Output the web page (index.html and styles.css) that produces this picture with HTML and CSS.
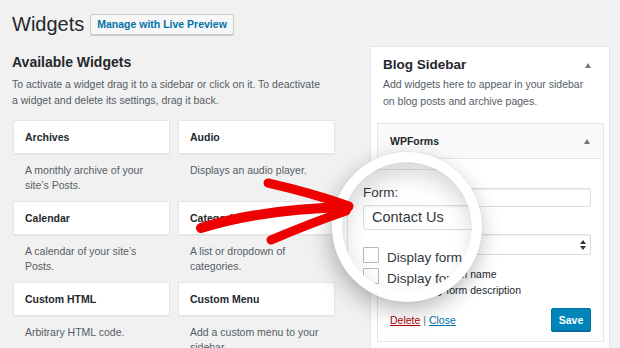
FILE: index.html
```html
<!DOCTYPE html>
<html lang="en">
<head>
  <meta charset="UTF-8">
  <title>Widgets</title>
  <link rel="stylesheet" href="styles.css">
</head>
<body>
  <div class="wrap">
    <header class="page-head">
      <h1>Widgets</h1>
      <a class="btn-preview" href="#">Manage with Live Preview</a>
    </header>

    <div class="columns">
      <section class="available">
        <h2>Available Widgets</h2>
        <p class="intro">To activate a widget drag it to a sidebar or click on it. To deactivate a widget and delete its settings, drag it back.</p>
        <div class="widget-grid">
          <div class="widget">
            <div class="widget-title">Archives</div>
            <p class="widget-desc">A monthly archive of your site&rsquo;s Posts.</p>
          </div>
          <div class="widget">
            <div class="widget-title">Audio</div>
            <p class="widget-desc">Displays an audio player.</p>
          </div>
          <div class="widget">
            <div class="widget-title">Calendar</div>
            <p class="widget-desc">A calendar of your site&rsquo;s Posts.</p>
          </div>
          <div class="widget">
            <div class="widget-title">Categories</div>
            <p class="widget-desc">A list or dropdown of categories.</p>
          </div>
          <div class="widget">
            <div class="widget-title">Custom HTML</div>
            <p class="widget-desc">Arbitrary HTML code.</p>
          </div>
          <div class="widget">
            <div class="widget-title">Custom Menu</div>
            <p class="widget-desc">Add a custom menu to your sidebar.</p>
          </div>
        </div>
      </section>

      <section class="sidebar-panel">
        <div class="panel-head">
          <h2>Blog Sidebar</h2>
          <span class="toggle"></span>
        </div>
        <p class="panel-desc">Add widgets here to appear in your sidebar on blog posts and archive pages.</p>

        <div class="wpforms">
          <div class="wpforms-head">
            <span>WPForms</span>
            <span class="toggle"></span>
          </div>
          <div class="wpforms-body">
            <label class="field-label">Title:</label>
            <div class="text-input"></div>
            <label class="field-label">Form:</label>
            <div class="select-input">
              <svg width="6" height="10" viewBox="0 0 6 10"><path d="M3 0L6 4H0Z M3 10L0 6H6Z" fill="#32373c"/></svg>
            </div>
            <label class="check"><span class="box"></span>Display form name</label>
            <label class="check"><span class="box"></span>Display form description</label>
            <div class="actions">
              <span><a class="link-delete" href="#">Delete</a> | <a class="link-close" href="#">Close</a></span>
              <button class="btn-save">Save</button>
            </div>
          </div>
        </div>
      </section>
    </div>
  </div>

  <!-- magnifier over the widget form -->
  <div class="lens">
    <div class="lens-inner">
      <div class="lens-form">
        <div class="lens-label">Form:</div>
        <div class="lens-input">Contact Us</div>
        <div class="lens-check"><span class="lens-box"></span>Display form</div>
        <div class="lens-check"><span class="lens-box"></span>Display form name</div>
      </div>
    </div>
  </div>

  <svg class="arrow" width="620" height="348" viewBox="0 0 620 348">
    <g fill="none" stroke="#ee0000" stroke-linecap="round">
      <path d="M201 228 Q262 209 348 207" stroke-width="10"/>
      <path d="M268 183 Q312 193 349 206" stroke-width="9"/>
      <path d="M271 240 Q311 223 346 211" stroke-width="9"/>
    </g>
  </svg>
</body>
</html>
```

FILE: styles.css
```css
:root {
  --bg: #f1f1f1;
  --border: #e5e5e5;
  --text: #23282d;
  --muted: #555d66;
  --blue: #0073aa;
}

body {
  margin: 0;
  height: 348px;
  overflow: hidden;
  position: relative;
  background: var(--bg);
  font-family: "Liberation Sans", Arial, sans-serif;
  color: var(--text);
}

.wrap {
  padding-left: 12px;
}

/* header */
.page-head {
  display: flex;
  align-items: center;
  gap: 6px;
  padding-top: 12px;
  height: 24px;
}

.page-head h1 {
  margin: 0;
  font-size: 20px;
  line-height: 24px;
  font-weight: 400;
  color: var(--text);
}

.btn-preview {
  display: block;
  height: 21px;
  box-sizing: border-box;
  padding: 0 6px;
  line-height: 19px;
  font-size: 10.5px;
  font-weight: 700;
  color: var(--blue);
  text-decoration: none;
  background: #f7f7f7;
  border: 1px solid #cccccc;
  border-radius: 2px;
  box-shadow: 0 1px 0 #cccccc;
}

.columns {
  display: flex;
  margin-top: 10px;
}

/* left column */
.available {
  width: 323px;
}

.available h2 {
  margin: 8px 0 0;
  font-size: 14px;
  line-height: 17px;
  font-weight: 700;
}

.intro {
  margin: 5px 0 12px;
  max-width: 314px;
  font-size: 10.5px;
  line-height: 16px;
  color: var(--muted);
}

.widget-grid {
  display: grid;
  grid-template-columns: 157px 157px;
  column-gap: 8px;
  margin-left: 1px;
}

.widget-title {
  height: 34px;
  box-sizing: border-box;
  padding: 0 11px;
  line-height: 32px;
  font-size: 10.5px;
  font-weight: 700;
  background: #fff;
  border: 1px solid var(--border);
  box-shadow: 0 1px 1px rgba(0, 0, 0, 0.04);
}

.widget-desc {
  margin: 0;
  height: 47px;
  box-sizing: border-box;
  padding: 9px 12px 0;
  font-size: 10.5px;
  line-height: 15px;
  color: var(--muted);
}

/* sidebar panel */
.sidebar-panel {
  margin-left: 35px;
  width: 240px;
  height: 320px;
  box-sizing: border-box;
  padding: 10px 6px 0;
  background: #fff;
  border: 1px solid var(--border);
  box-shadow: 0 1px 1px rgba(0, 0, 0, 0.04);
}

.panel-head {
  display: flex;
  justify-content: space-between;
  align-items: center;
  padding: 0 12px 0 6px;
}

.panel-head h2 {
  margin: 0;
  font-size: 13.5px;
  line-height: 16px;
  font-weight: 700;
}

.toggle {
  width: 0;
  height: 0;
  border-left: 3.5px solid transparent;
  border-right: 3.5px solid transparent;
  border-bottom: 5px solid #72777c;
}

.panel-desc {
  margin: 3px 0 13px;
  padding: 0 6px;
  max-width: 208px;
  font-size: 10.5px;
  line-height: 17px;
  color: var(--muted);
}

.wpforms {
  width: 225px;
  border: 1px solid var(--border);
}

.wpforms-head {
  display: flex;
  justify-content: space-between;
  align-items: center;
  height: 34px;
  padding: 0 13px 0 12px;
  font-size: 10.5px;
  font-weight: 700;
  background: #fafafa;
  border-bottom: 1px solid var(--border);
}

.wpforms-body {
  padding: 0 12px 10px;
  font-size: 10.5px;
  color: var(--text);
}

.field-label {
  display: block;
  margin-top: 12px;
  line-height: 15px;
}

.text-input,
.select-input {
  margin-top: 2px;
  height: 19px;
  box-sizing: border-box;
  border: 1px solid #dddddd;
  border-radius: 2px;
  box-shadow: inset 0 1px 2px rgba(0, 0, 0, 0.07);
}

.select-input {
  height: 21px;
  margin-top: 0;
  display: flex;
  justify-content: flex-end;
  align-items: center;
  padding-right: 4px;
  margin-bottom: 11px;
}

.check {
  display: flex;
  align-items: center;
  line-height: 16px;
}

.check .box {
  width: 12px;
  height: 12px;
  box-sizing: border-box;
  margin-right: 7px;
  border: 1px solid #b4b9be;
  background: #fff;
}

.actions {
  display: flex;
  justify-content: space-between;
  align-items: center;
  margin-top: 10px;
  color: #72777c;
}

.link-delete {
  color: #a00;
}

.link-close {
  color: var(--blue);
}

.btn-save {
  width: 40px;
  height: 23px;
  padding: 0;
  font-family: inherit;
  font-size: 10.5px;
  font-weight: 700;
  color: #fff;
  background: #0085ba;
  border: 1px solid #0073aa;
  border-radius: 2px;
  box-shadow: 0 1px 0 #006799;
}

/* magnifier */
.lens {
  position: absolute;
  left: 332px;
  top: 152px;
  width: 150px;
  height: 150px;
  box-sizing: border-box;
  padding: 10px;
  border-radius: 50%;
  background: #fff;
  box-shadow: -2px 8px 22px rgba(0, 0, 0, 0.28), 0 0 2px rgba(0, 0, 0, 0.08);
}

.lens-inner {
  position: relative;
  width: 130px;
  height: 130px;
  border-radius: 50%;
  overflow: hidden;
  background: #fff;
}

.lens-inner::after {
  content: "";
  position: absolute;
  inset: 0;
  border-radius: 50%;
  box-shadow: inset 2px 12px 22px rgba(0, 0, 0, 0.16);
}

.lens-form {
  margin: 7px 0 0 5px;
  height: 160px;
  padding: 15px 0 0 15px;
  border-left: 1px solid var(--border);
  border-top: 1px solid var(--border);
  color: #32373c;
  font-size: 13.5px;
}

.lens-label {
  line-height: 16px;
}

.lens-input {
  margin-top: 4px;
  width: 150px;
  height: 25px;
  box-sizing: border-box;
  padding-left: 8px;
  line-height: 23px;
  font-size: 14.5px;
  border: 1px solid #dddddd;
  border-radius: 3px;
  box-shadow: inset 0 1px 2px rgba(0, 0, 0, 0.06);
}

.lens-input + .lens-check {
  margin-top: 17px;
}

.lens-check {
  display: flex;
  align-items: center;
  gap: 8px;
  height: 21px;
  line-height: 16px;
  white-space: nowrap;
}

.lens-box {
  flex: none;
  width: 16px;
  height: 16px;
  box-sizing: border-box;
  border: 1px solid #b4b9be;
  border-radius: 1px;
  align-self: flex-start;
}

.arrow {
  position: absolute;
  left: 0;
  top: 0;
  pointer-events: none;
}
```
